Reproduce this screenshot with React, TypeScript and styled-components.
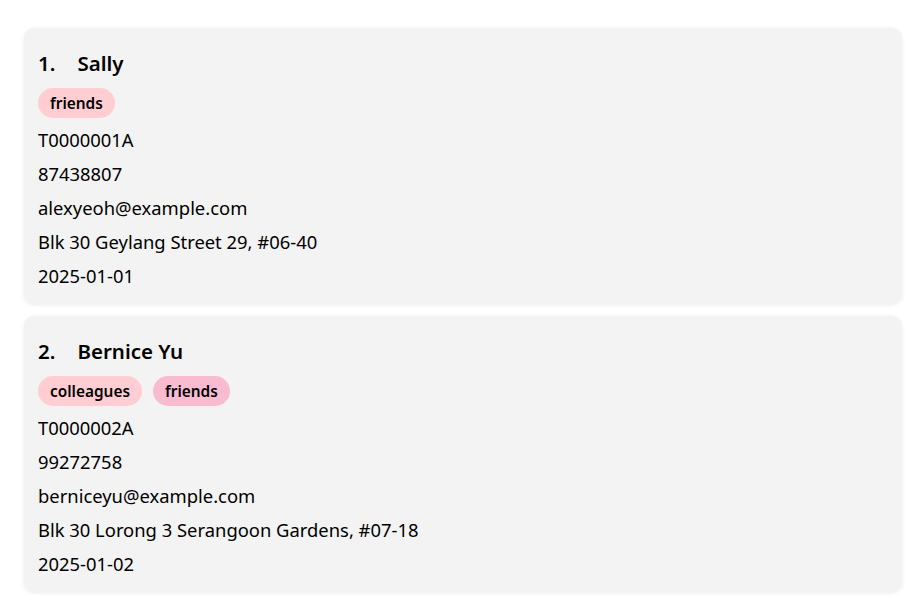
import React from "react";
import styled, { createGlobalStyle } from "styled-components";

const GlobalStyle = createGlobalStyle`
  html, body { margin: 0; padding: 0; background: #ffffff; }
  body { font-family: "Noto Sans", "Open Sans", sans-serif; color: #000; }
`;

const List = styled.div`
  display: flex;
  flex-direction: column;
  gap: 12px;
  padding: 28px 19px 8px 24px;
`;

const Card = styled.div`
  background: #f3f3f3;
  border-radius: 10px;
  box-shadow: 0 1px 4px rgba(0, 0, 0, 0.08);
  padding: 19px 14px 11px 14px;
  display: flex;
  flex-direction: column;
`;

const Title = styled.div`
  display: flex;
  align-items: center;
  gap: 22px;
  height: 31px;
  font-size: 20.5px;
  font-weight: 600;
  margin-bottom: 10px;
`;

const Index = styled.span`
  min-width: 16px;
`;

const Tags = styled.div`
  display: flex;
  gap: 11px;
  margin-bottom: 5px;
`;

const Tag = styled.span<{ $bg: string }>`
  display: inline-flex;
  align-items: center;
  height: 30px;
  padding: 0 12px;
  border-radius: 15px;
  background: ${(p) => p.$bg};
  font-size: 15.4px;
  font-weight: 600;
`;

const Line = styled.div`
  font-size: 18.4px;
  line-height: 34px;
  height: 34px;
`;

type Person = {
  name: string;
  tags: { label: string; bg: string }[];
  id: string;
  phone: string;
  email: string;
  address: string;
  date: string;
};

const people: Person[] = [
  {
    name: "Sally",
    tags: [{ label: "friends", bg: "#ffcdd2" }],
    id: "T0000001A",
    phone: "87438807",
    email: "alexyeoh@example.com",
    address: "Blk 30 Geylang Street 29, #06-40",
    date: "2025-01-01",
  },
  {
    name: "Bernice Yu",
    tags: [
      { label: "colleagues", bg: "#ffcdd2" },
      { label: "friends", bg: "#f8bbd0" },
    ],
    id: "T0000002A",
    phone: "99272758",
    email: "berniceyu@example.com",
    address: "Blk 30 Lorong 3 Serangoon Gardens, #07-18",
    date: "2025-01-02",
  },
];

export default function App() {
  return (
    <>
      <GlobalStyle />
      <List>
        {people.map((p, i) => (
          <Card key={p.id}>
            <Title>
              <Index>{i + 1}.</Index>
              <span>{p.name}</span>
            </Title>
            <Tags>
              {p.tags.map((t) => (
                <Tag key={t.label} $bg={t.bg}>
                  {t.label}
                </Tag>
              ))}
            </Tags>
            <Line>{p.id}</Line>
            <Line>{p.phone}</Line>
            <Line>{p.email}</Line>
            <Line>{p.address}</Line>
            <Line>{p.date}</Line>
          </Card>
        ))}
      </List>
    </>
  );
}
